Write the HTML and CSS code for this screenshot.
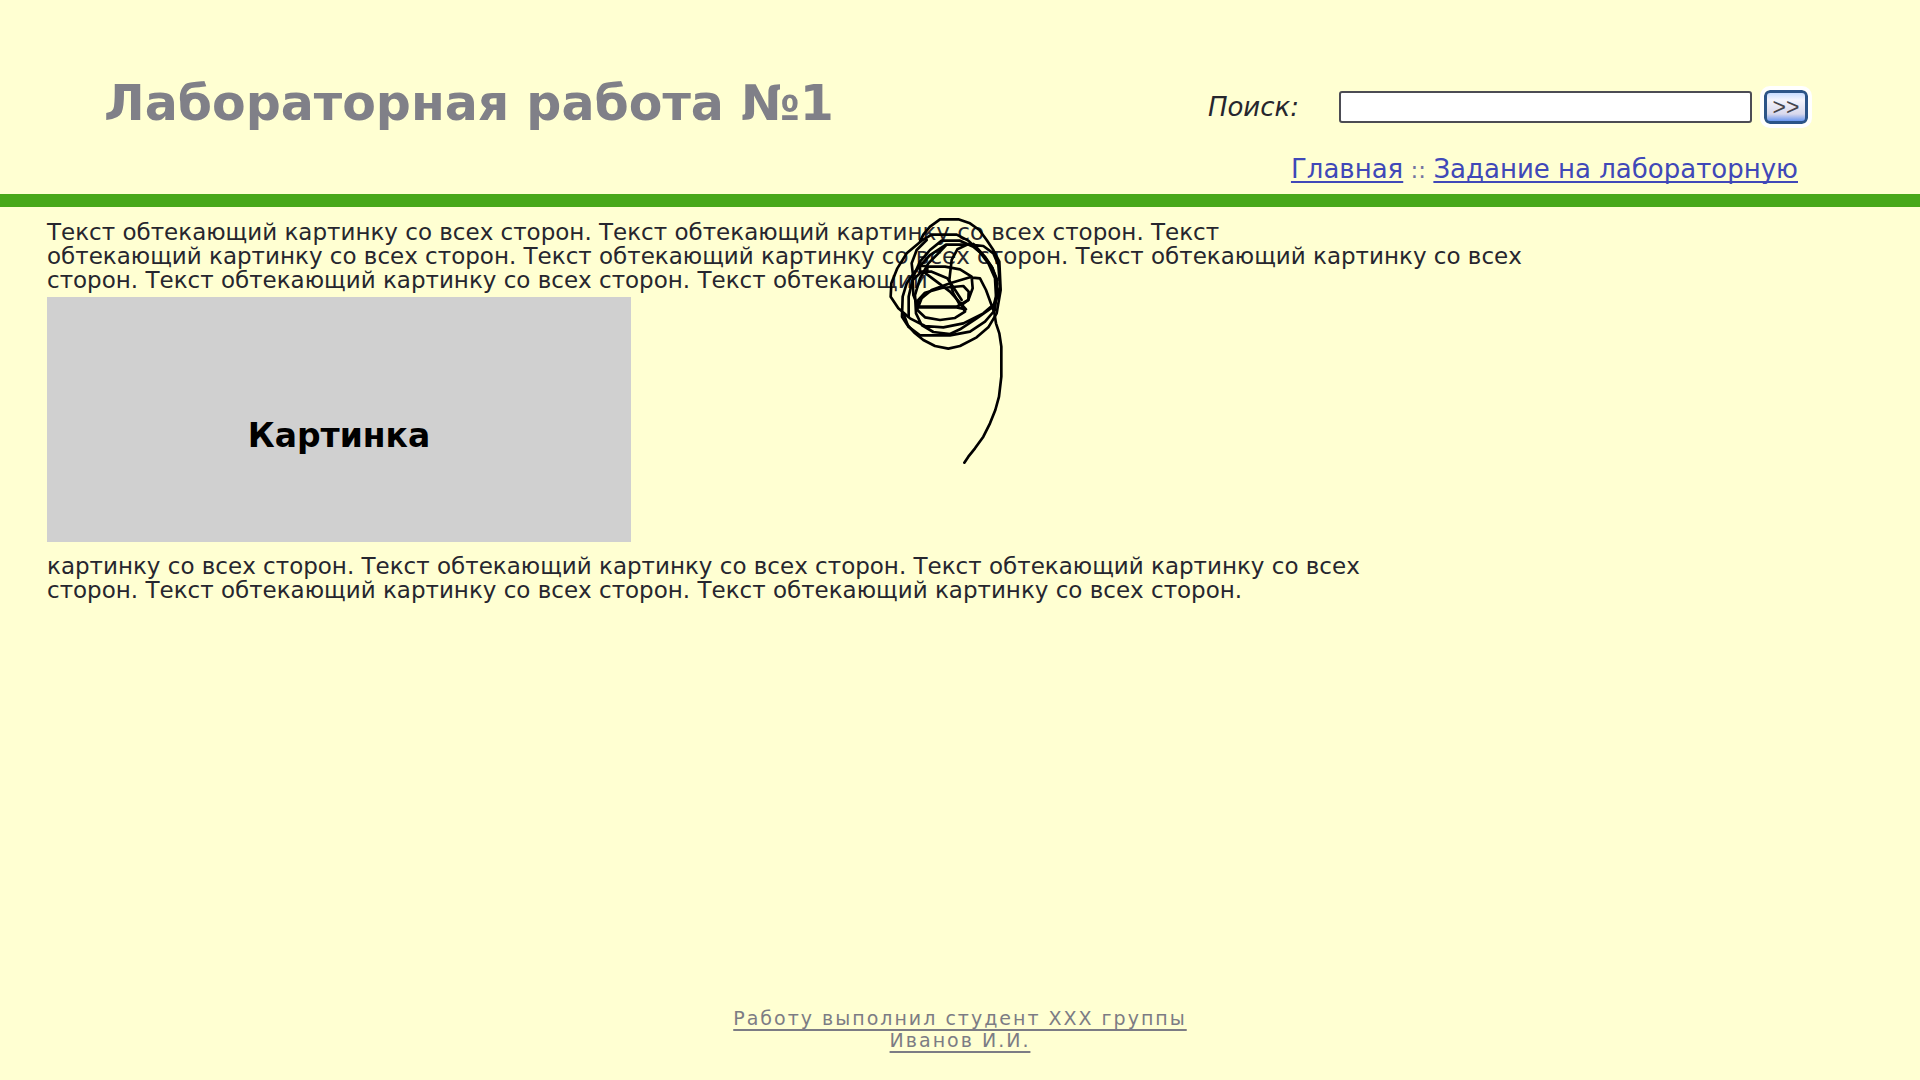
FILE: index.html
```html
<!DOCTYPE html>
<html lang="ru">
<head>
<meta charset="utf-8">
<title>Лабораторная работа №1</title>
<link rel="stylesheet" href="styles.css">
</head>
<body>
<header class="header">
  <h1 class="title">Лабораторная работа №1</h1>
  <div class="tools">
    <form class="search">
      <label class="search-label" for="q">Поиск:</label>
      <input class="search-input" id="q" type="text">
      <button class="search-button" type="button">&gt;&gt;</button>
    </form>
    <nav class="nav"><a href="#">Главная</a> <span class="sep">::</span> <a href="#">Задание на лабораторную</a></nav>
  </div>
</header>
<main class="content">
  <p class="text">Текст обтекающий картинку со всех сторон. Текст обтекающий картинку со всех сторон. Текст<br>
  обтекающий картинку со всех сторон. Текст обтекающий картинку со всех сторон. Текст обтекающий картинку со всех<br>
  сторон. Текст обтекающий картинку со всех сторон. Текст обтекающий</p>
  <div class="picture">Картинка</div>
  <p class="text">картинку со всех сторон. Текст обтекающий картинку со всех сторон. Текст обтекающий картинку со всех<br>
  сторон. Текст обтекающий картинку со всех сторон. Текст обтекающий картинку со всех сторон.</p>
  <svg class="scribble" viewBox="0 0 540 800" aria-hidden="true">
    <path d="M180 124L190 104L210 80L240 58H295L330 70L358 90L380 120L400 150L418 185L422 270L410 340L385 382L350 412L300 438L265 446L225 438L190 420L165 400L140 372L126 350L128 290L140 250L165 215L210 165L258 134H330L370 138L400 160L415 195L420 260L405 310L370 340L310 370L250 382L195 378L150 355L115 325L92 290L94 250L112 205L140 160L185 122L215 104H290L325 122L355 150L385 190L405 235L408 290L400 320L350 355L300 388L270 402L220 396L185 375L168 340L165 285L180 235L205 190L235 160L260 134"/>
    <path d="M160 235L155 190L170 150L200 120M146 350V290L160 230L180 185L210 150L245 122H300L340 140L375 170L398 205L412 250L405 330L375 365L330 395L270 406H180L145 380L130 340"/>
    <path d="M180 198H202V215H180ZM190 215L230 245L270 275L318 328L290 322H175L160 285L158 240L185 215H215L262 235L280 262L305 300M202 200H255L300 208L335 230L338 265L325 300L290 320H175L185 295L215 270L270 250L330 232L360 235L378 270L400 330"/>
    <path d="M175 300L195 278L245 264L310 258L326 275L325 300L305 315L315 335L285 354L240 360L195 352L172 330ZM322 134L292 148L275 180L268 240L280 280L300 315"/>
    <path d="M340 132L370 165L395 200L412 240M400 320L408 370L418 400L424 440V530L417 590L406 630L390 670L370 710L345 745L325 770L313 788"/>
  </svg>
</main>
<footer class="footer"><a href="#">Работу выполнил студент XXX группы<br>Иванов И.И.</a></footer>
</body>
</html>
```

FILE: styles.css
```css
* { box-sizing: border-box; }
body {
  margin: 0;
  min-height: 100vh;
  display: flex;
  flex-direction: column;
  background: #ffffd2;
  color: #26262e;
  font-family: "DejaVu Sans", Verdana, sans-serif;
  font-size: 23px;
  line-height: 24px;
}
.header {
  display: flex;
  justify-content: space-between;
  align-items: flex-start;
  padding: 74px 108px 8px 104px;
  border-bottom: 13px solid #48a81a;
}
.title {
  margin: 0;
  color: #808088;
  font-weight: bold;
  font-size: 49px;
  line-height: 60px;
}
.tools {
  display: flex;
  flex-direction: column;
  align-items: flex-end;
  gap: 33px;
  padding-top: 16px;
}
.search {
  display: flex;
  align-items: center;
  gap: 8px;
}
.search-label {
  margin-right: 32px;
  font-size: 26px;
  font-style: italic;
}
.search-input {
  width: 413px;
  height: 32px;
  padding: 0 8px;
  border: 2px solid #4c4c54;
  border-radius: 3px;
  background: #fff;
  font: inherit;
}
.search-button {
  width: 44px;
  height: 34px;
  padding: 0;
  margin: 0 4px;
  border: 3px solid #2c5488;
  border-radius: 6px;
  outline: 4px solid #fff;
  background: linear-gradient(#c8dcff, #f4f4fc 25%, #d8d8ec 75%, #6c98f0);
  color: #44444c;
  font: 23px/24px "Liberation Sans", Arial, sans-serif;
}
.nav {
  padding: 0 14px 4px 0;
  color: #7474a0;
}
.nav a {
  color: #4048b8;
  font-size: 26px;
  text-decoration-thickness: 2px;
  text-underline-offset: 3px;
  text-decoration-skip-ink: none;
}
.content {
  position: relative;
  flex: 1;
  padding: 13px 47px 0;
}
.text { margin: 0; }
.picture {
  display: flex;
  align-items: center;
  justify-content: center;
  width: 584px;
  height: 245px;
  margin: 5px 0 12px;
  padding-top: 32px;
  background: #d0d0d0;
  color: #000;
  font-weight: bold;
  font-size: 33px;
}
.scribble {
  position: absolute;
  top: -7px;
  left: 860px;
  width: 180px;
  fill: none;
  stroke: #000;
  stroke-width: 8;
  stroke-linejoin: round;
  stroke-linecap: round;
}
.footer {
  padding-bottom: 29px;
  text-align: center;
  font-size: 19px;
  line-height: 22px;
  letter-spacing: 2px;
}
.footer a { color: #7c7c84; text-decoration-thickness: 2px; text-underline-offset: 4px; text-decoration-skip-ink: none; }
```
